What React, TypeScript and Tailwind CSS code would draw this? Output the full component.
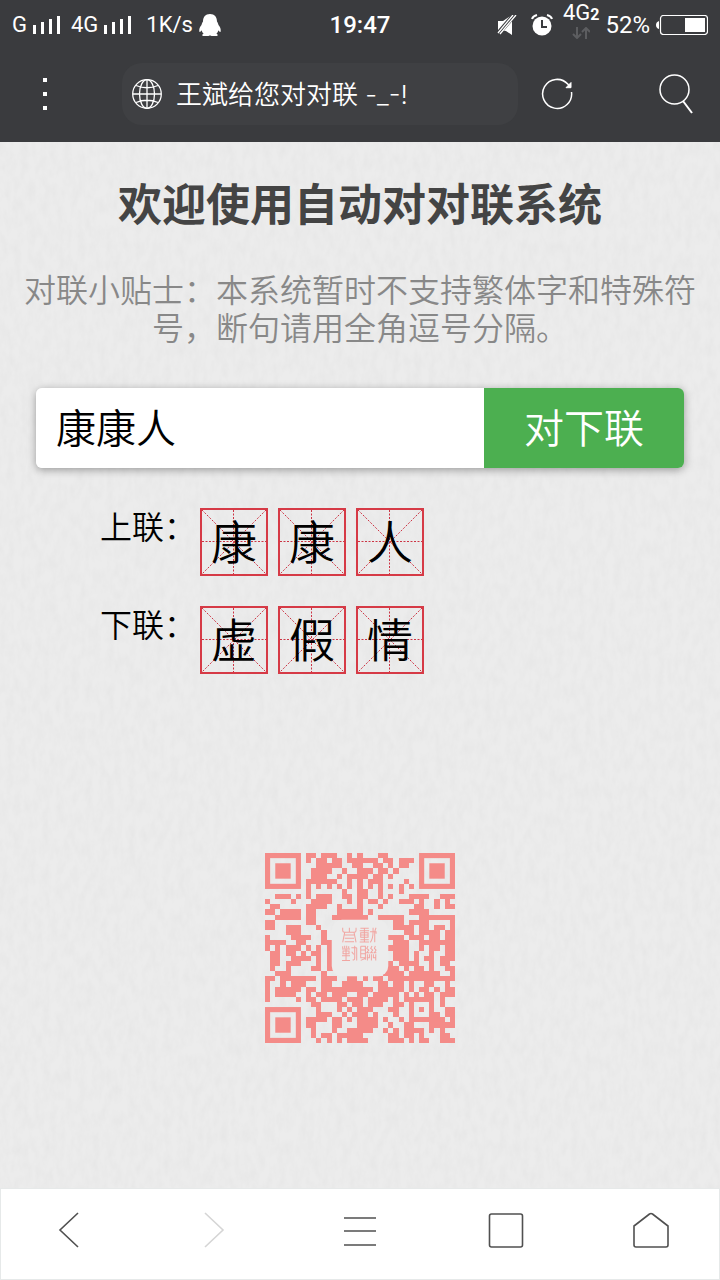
import type { ReactNode } from "react"

const upper = ["康", "康", "人"]
const lower = ["虚", "假", "情"]

// 37 x 37 modules, "#" is a dark one. Finder patterns are drawn on their own.
const qrRows = [
  "........##.###..#.#...##.............",
  "........#.##.##.######.##.###........",
  "..........#####..##..##.#.##.........",
  ".........####..#..###.##.#...........",
  ".........###..#.####.##.#............",
  "........######..#.#.###....#.........",
  "........#.#.#.#.#.#.#.#.#.#.#........",
  "........#......#..##..#...#..........",
  "..###.#.#.###..##.##..#.#...####..###",
  "#....#...####...#.#.##.#..###.#..#.#.",
  ".##.....####..#...#...#......##..#.##",
  "##.####.##....#####.#.......####.....",
  "..#####.##...#######..#####...#######",
  "##......##...............##.####....#",
  "##..###...#..............####.##.##.#",
  "....###....#...............##.####.##",
  "#....####..#............###.###.##.##",
  "####..##...###...........###..#######",
  "#.#.###.#.#.#...........####..#.##.##",
  ".##.##.#.##.#............###.#..#..##",
  ".##..####.#.#............###.#.##.###",
  ".##.###...#.#...........#.####..#.##.",
  ".#..#....##.##.........###.#.##.#..##",
  "..###......#...........####.######..#",
  "##.#######.###..##.#.##.#############",
  "#..#.###...##..####...##.##.#..##..#.",
  "#.#####.##.##########.#####.#.##.#.##",
  "#.####..#.##.###..##.#####.#.#.##.###",
  "#.....#.##.####.###.####.#.######.#..",
  ".........##...##.##.###..##.#...#.#..",
  "..........#...#.#.###...##..#.#.#..##",
  "..........###..#.###.#...#..#...##.##",
  "........####.##.#.####.#..#.#######.#",
  "........##...##...####..#..##...#####",
  ".........#...#..#####..#.#.####.#.#..",
  ".........#.##.#####.....##.##.#...##.",
  "..........#.#.#.####....###.#.##..###",
]

const qrPath = qrRows
  .flatMap((row, y) => [...row].map((m, x) => (m === "#" ? `M${x} ${y}h1v1h-1z` : "")))
  .join("")

function Signal() {
  return (
    <svg viewBox="0 0 28 18" className="h-[18px] w-7" fill="currentColor" aria-hidden="true">
      <path d="M0 9h3v9H0zM8 6h3v12H8zM16 3h3v15h-3zM24 0h3v18h-3z" />
    </svg>
  )
}

function StatusBar() {
  return (
    <div className="grid h-[50px] grid-cols-[1fr_auto_1fr] items-center px-3 text-2xl">
      <div className="flex items-center gap-[6px]">
        <span className="text-[22px]">G</span>
        <Signal />
        <span className="ml-1 text-[22px]">4G</span>
        <Signal />
        <span className="ml-2 text-[22px]">1K/s</span>
        <svg viewBox="0 0 22 24" className="h-6 w-[22px]" fill="currentColor" aria-hidden="true">
          <path d="M11 1c-4.600 0-7 3-7 7.500C3 10 2.800 11 2.500 12 .8 14 0 16 .3 18.500c.2 1 1.400.4 2.300-1.200.3 1.400 1 2.500 2 3.400-1.600.5-2 2.300.2 2.300h4.500c.8 0 1.200-.4 1.700-.8.5.4.9.8 1.700.8h4.500c2.200 0 1.800-1.800.2-2.300 1-.9 1.700-2 2-3.400.9 1.600 2.100 2.200 2.300 1.200.3-2.500-.5-4.500-2.200-6.500-.3-1-.5-2-1.500-3.500C18 4 15.600 1 11 1z" />
        </svg>
      </div>
      <span className="font-medium">19:47</span>
      <div className="flex items-center justify-end gap-[6px]">
        <svg viewBox="0 0 20 20" className="mr-2 h-5 w-5" aria-hidden="true">
          <path d="M1 6h5l9-6v20l-6-4-8-1z" fill="currentColor" />
          <path d="M0 20 18 -1" stroke="#3a3b3e" strokeWidth="5" />
          <path d="M1 18 16 0M3 19 19 0" stroke="currentColor" strokeWidth="1.300" />
        </svg>
        <svg viewBox="0 0 22 22" className="mr-1 h-[22px] w-[22px]" fill="none" stroke="currentColor" aria-hidden="true">
          <circle cx="11" cy="12" r="9.500" fill="currentColor" stroke="none" />
          <path d="M1 5Q2 2 6 1M21 5Q20 2 16 1" strokeWidth="2" />
          <path d="M11 6v7h5" stroke="#3a3b3e" strokeWidth="2" />
        </svg>
        <div className="flex flex-col items-center pb-2">
          <span className="text-[22px] leading-5">
            4G<span className="text-base font-bold">2</span>
          </span>
          <svg viewBox="0 0 18 12" className="h-3 w-[18px]" fill="none" stroke="#5c5d60" strokeWidth="2" aria-hidden="true">
            <path d="M5 0v11M1 7l4 4 4-4M14 12V1M10 5l4-4 4 4" />
          </svg>
        </div>
        <span>52%</span>
        <svg viewBox="0 0 52 20" className="h-5 w-[52px]" aria-hidden="true">
          <path d="M3 6Q0 7 0 10t3 4z" fill="currentColor" />
          <rect x="4.500" y=".500" width="47" height="19" rx="3" fill="none" stroke="currentColor" strokeWidth="1.200" />
          <rect x="29" y="3" width="20" height="14" fill="currentColor" />
        </svg>
      </div>
    </div>
  )
}

function Toolbar() {
  return (
    <div className="flex h-[92px] items-center pb-1">
      <button type="button" aria-label="更多" className="flex w-[90px] justify-center">
        <svg viewBox="0 0 4 32" className="h-8 w-1" fill="currentColor">
          <path d="M0 0h4v4H0zM0 14h4v4H0zM0 28h4v4H0z" />
        </svg>
      </button>
      <div className="ml-8 flex h-[62px] flex-1 items-center gap-[14px] rounded-[20px] bg-[#3f4043] px-[10px]">
        <svg viewBox="0 0 30 30" className="h-[30px] w-[30px]" fill="none" stroke="currentColor" strokeWidth="1.300" aria-hidden="true">
          <circle cx="15" cy="15" r="14.300" />
          <ellipse cx="15" cy="15" rx="7.500" ry="14.300" />
          <path d="M15 1v28M1 15h28M4 6.500Q15 11 26 6.500M4 23.500Q15 19 26 23.500" />
        </svg>
        <span className="font-[Inter,'Noto_Sans_CJK_SC',sans-serif] text-[26px] font-[350]">王斌给您对对联 -_-!</span>
      </div>
      <button type="button" aria-label="刷新" className="flex w-[78px] justify-center">
        <svg viewBox="0 0 32 32" className="h-8 w-8" fill="none" stroke="currentColor" strokeWidth="1.500">
          <path d="M30.500 14A14.500 14.500 0 1 1 27 6.300L29.500 9.500" />
          <path d="M30 4.500v5.200h-5z" fill="currentColor" strokeWidth="1" />
        </svg>
      </button>
      <button type="button" aria-label="搜索" className="ml-9 flex w-[88px] justify-center">
        <svg viewBox="0 0 34 40" className="h-10 w-[34px]" fill="none" stroke="currentColor" strokeWidth="1.500">
          <circle cx="15.500" cy="15.500" r="14.500" />
          <path d="M24 27 33 39" strokeWidth="2" />
        </svg>
      </button>
    </div>
  )
}

function Cell({ char }: { char: string }) {
  return (
    <div className="relative flex h-[68px] w-[68px] items-center justify-center border-2 border-[#d63a46]">
      <svg viewBox="0 0 64 64" className="absolute inset-0 h-full w-full" fill="none" stroke="#cc3444" strokeDasharray="2 1.500" aria-hidden="true">
        <path d="M0 0 64 64M64 0 0 64M31.500 0V64M0 31.500H64" />
      </svg>
      <span className="relative pt-[2px] text-[46px] leading-none font-[350]">{char}</span>
    </div>
  )
}

function Couplet({ label, chars }: { label: string; chars: string[] }) {
  return (
    <div className="flex">
      <span className="w-[100px] text-[32px] leading-10 font-[350]">{label}</span>
      <div className="flex gap-[10px]">
        {chars.map((char, idx) => (
          <Cell key={idx} char={char} />
        ))}
      </div>
    </div>
  )
}

function Finder({ x, y }: { x: number; y: number }) {
  return (
    <g>
      <rect x={x + 0.5} y={y + 0.5} width="6" height="6" fill="none" stroke="#f48b88" />
      <rect x={x + 2} y={y + 2} width="3" height="3" />
    </g>
  )
}

function QrCode() {
  return (
    <svg viewBox="0 0 37 37" className="h-[190px] w-[190px]" fill="#f48b88" role="img" aria-label="二维码">
      <path d={qrPath} shapeRendering="crispEdges" />
      <Finder x={0} y={0} />
      <Finder x={30} y={0} />
      <Finder x={0} y={30} />
      <rect x="13" y="13" width="11" height="11" rx="2" fill="#ececec" />
      {/* Seal mark in the middle */}
      <g transform="translate(12.270 12.070) scale(.065)" fill="none" stroke="#f1a5a1" strokeWidth="3">
        <path d="M44 38v8q0 6 6 6h28q6 0 6-6v-8M64 38v14M50 52l-6 30M78 52l6 30M50 60h28M50 70h28M50 80h28" />
        <path d="M97 40h25M95 47h28M98 53h22v14H98zM98 60h22M109 40v41M97 74h25M95 81h28M126 50h18v6M135 38v12q0 20-8 32M144 38q-4 8-4 14v30" />
        <path d="M44 94v6M50 92v8M56 92v8M62 94v6M42 102h24M45 108h18v8H45zM42 122h24M54 102v34M42 136h24M70 98h16M80 92v38q0 6-6 4M71 110l6 8M86 98v38" />
        <path d="M98 94h14v40M98 94v34h14M98 105h14M98 116h14M98 136l14-6M120 93l-4 7 6 5-6 8h8M132 93l-4 7 6 5-6 8h8M142 93l-3 7 5 5-5 8h6M118 118v18M124 118v10h-8M130 118v18M136 118v10h8M143 118v18" />
      </g>
    </svg>
  )
}

function NavButton({ label, children, disabled }: { label: string; children: ReactNode; disabled?: boolean }) {
  return (
    <button type="button" aria-label={label} disabled={disabled} className="flex w-12 justify-center text-[#505050] disabled:text-[#d5d5d5]">
      <svg viewBox="0 0 36 36" className="h-9 w-9" fill="none" stroke="currentColor" strokeWidth="1.600">
        {children}
      </svg>
    </button>
  )
}

export default function App() {
  return (
    <div className="flex min-h-screen flex-col bg-[#ececec] font-[Roboto,'Noto_Sans_CJK_SC',sans-serif] text-black">
      <header className="bg-[#3a3b3e] text-white">
        <StatusBar />
        <Toolbar />
      </header>

      <main className="relative flex flex-1 flex-col">
        {/* Paper grain */}
        <svg className="absolute inset-0 h-full w-full" aria-hidden="true">
          <filter id="paper">
            <feTurbulence type="fractalNoise" baseFrequency="0.14 0.07" numOctaves="3" seed="4" />
            <feColorMatrix values="0 0 0 0 0.5  0 0 0 0 0.5  0 0 0 0 0.5  0.18 0 0 0 -0.06" />
          </filter>
          <rect width="100%" height="100%" filter="url(#paper)" />
        </svg>

        <div className="relative flex flex-1 flex-col">
          <h1 className="mt-[34px] text-center text-[44px] leading-[60px] font-bold text-[#444]">
            欢迎使用自动对对联系统
          </h1>
          <p className="mt-9 px-6 text-center text-[32px] leading-[38px] font-[350] text-[#888]">
            对联小贴士：本系统暂时不支持繁体字和特殊符号，断句请用全角逗号分隔。
          </p>

          <form
            className="mx-9 mt-10 flex h-20 overflow-hidden rounded-md shadow-[0_2px_8px_rgba(0,0,0,0.35)]"
            onSubmit={(e) => e.preventDefault()}
          >
            <input
              aria-label="上联"
              defaultValue="康康人"
              className="min-w-0 flex-1 bg-white px-5 pt-1 text-[40px] font-[350] outline-none"
            />
            <button type="submit" className="w-[200px] bg-[#4caf50] pt-1 text-[40px] font-[350] text-white">
              对下联
            </button>
          </form>

          <div className="mt-10 ml-[100px] flex flex-col gap-[30px]">
            <Couplet label="上联：" chars={upper} />
            <Couplet label="下联：" chars={lower} />
          </div>

          <div className="mt-auto mb-[145px] flex justify-center">
            <QrCode />
          </div>
        </div>
      </main>

      <nav className="flex h-[92px] items-center justify-between border border-[#e6e9e9] bg-white px-11 pb-2">
        <NavButton label="后退">
          <path d="M27 1 9 18l18 17" />
        </NavButton>
        <NavButton label="前进" disabled>
          <path d="M8 1l18 17L8 35" />
        </NavButton>
        <NavButton label="菜单">
          <path d="M2 6h32M2 19h32M2 33h32" />
        </NavButton>
        <NavButton label="标签页">
          <rect x="1.500" y="2" width="33" height="33" rx="2" />
        </NavButton>
        <NavButton label="主页">
          <path d="M1 14 16.500 2q1.500-1 3 0L35 14v19q0 2-2 2H3q-2 0-2-2z" />
        </NavButton>
      </nav>
    </div>
  )
}
